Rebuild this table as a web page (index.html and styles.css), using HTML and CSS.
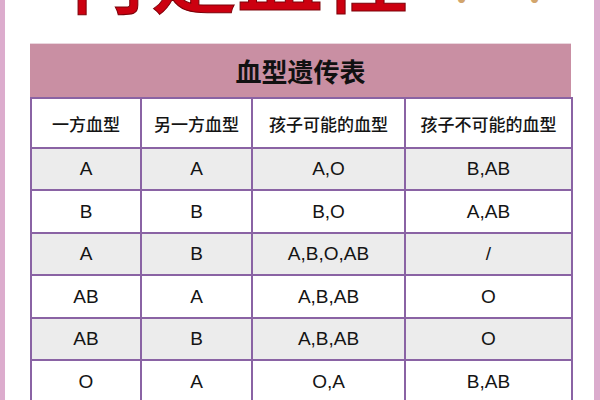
FILE: index.html
```html
<!DOCTYPE html>
<html lang="zh">
<head>
<meta charset="utf-8">
<link rel="stylesheet" href="styles.css">
</head>
<body>
<div class="page">
  <div class="strip strip-left"></div>
  <main class="main">
    <div class="headline"><span class="red">再是血性</span><span class="tan">？？</span></div>
    <section class="card">
      <div class="band">血型遗传表</div>
      <table class="grid">
        <colgroup>
          <col class="c1"><col class="c2"><col class="c3"><col class="c4">
        </colgroup>
        <thead>
          <tr class="head"><th>一方血型</th><th>另一方血型</th><th>孩子可能的血型</th><th>孩子不可能的血型</th></tr>
        </thead>
        <tbody>
          <tr class="gray r1"><td>A</td><td>A</td><td>A,O</td><td>B,AB</td></tr>
          <tr class="r2"><td>B</td><td>B</td><td>B,O</td><td>A,AB</td></tr>
          <tr class="gray r1"><td>A</td><td>B</td><td>A,B,O,AB</td><td>/</td></tr>
          <tr class="r2"><td>AB</td><td>A</td><td>A,B,AB</td><td>O</td></tr>
          <tr class="gray r1"><td>AB</td><td>B</td><td>A,B,AB</td><td>O</td></tr>
          <tr class="r2"><td>O</td><td>A</td><td>O,A</td><td>B,AB</td></tr>
        </tbody>
      </table>
    </section>
  </main>
  <div class="strip strip-right"></div>
</div>
</body>
</html>
```

FILE: styles.css
```css
html, body {
  margin: 0;
  padding: 0;
  background: #ffffff;
}
.page {
  display: flex;
  width: 600px;
  height: 400px;
  overflow: hidden;
}
.strip {
  flex: 0 0 auto;
  background: #dcaccd;
}
.strip-left { width: 5px; }
.strip-right { width: 6px; }
.main {
  flex: 1 1 auto;
  padding: 0 23px 0 25px;
  overflow: hidden;
}
.headline {
  height: 43px;
  overflow: hidden;
  white-space: nowrap;
  display: flex;
  align-items: flex-start;
}
.red, .tan {
  display: block;
  font-family: "Noto Sans CJK SC", sans-serif;
}
.red {
  font-weight: 500;
  font-size: 86px;
  line-height: 86px;
  margin-top: -73px;
  margin-left: 35px;
  color: #cc0010;
  -webkit-text-stroke: 1px #7a0008;
}
.tan {
  font-weight: 700;
  font-size: 40px;
  line-height: 40px;
  margin-top: -35px;
  margin-left: 43px;
  letter-spacing: 33px;
  color: #d2a56c;
}
.card {
  width: 541px;
}
.band {
  height: 53px;
  border-top: 1px solid #ead6de;
  background: #c98fa3;
  color: #111111;
  font-family: "Noto Sans CJK SC", sans-serif;
  font-weight: 700;
  font-size: 26px;
  display: flex;
  align-items: center;
  justify-content: center;
}
.grid {
  width: 541px;
  border-collapse: collapse;
  table-layout: fixed;
  font-family: "Liberation Sans", Arial, sans-serif;
  color: #141414;
}
.c1 { width: 110px; }
.c2 { width: 111px; }
.c3 { width: 153px; }
.c4 { width: 167px; }
.grid th, .grid td {
  border: 2px solid #8a63a4;
  text-align: center;
  padding: 0;
}
.grid th {
  font-family: "Noto Sans CJK SC", sans-serif;
  font-weight: 500;
  font-size: 17px;
  height: 48px;
  background: #ffffff;
}
.grid td {
  font-size: 19px;
}
.r1 td { height: 40px; }
.r2 td { height: 41px; }
.gray td { background: #ececec; }
```
